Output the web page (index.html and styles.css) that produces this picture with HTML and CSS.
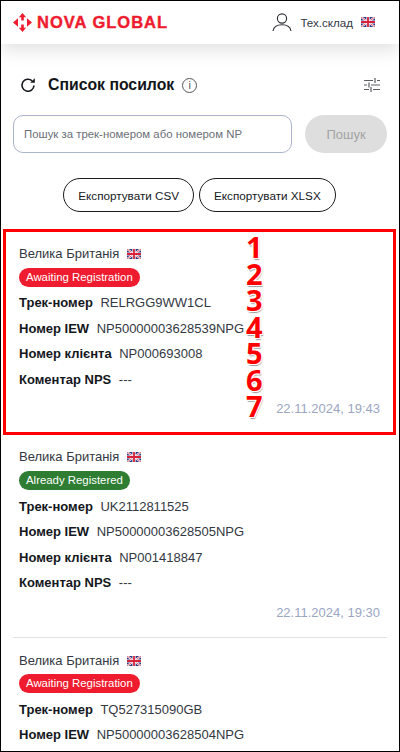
FILE: index.html
```html
<!DOCTYPE html>
<html lang="uk">
  <head>
    <meta charset="UTF-8" />
    <meta name="viewport" content="width=device-width, initial-scale=1.0" />
    <title>Список посилок</title>
    <link rel="stylesheet" href="styles.css">
  </head>

  <body>
    <div class="page">
      <header class="topbar">
        <div class="logo">
          <svg class="logo-mark" viewBox="0 0 19 19" width="19" height="19">
            <path d="M9.500 0l3.600 4.200h-2.300v3.300H8.200V4.200H5.900zM9.500 19l-3.600-4.200h2.300v-3.300h2.600v3.300h2.300zM0 9.500l5-4.300v8.600zM19 9.500l-5 4.300V5.200z" />
          </svg>
          <span class="logo-text">NOVA GLOBAL</span>
        </div>
        <div class="user">
          <svg class="user-icon" viewBox="0 0 20 20" width="20" height="20">
            <circle cx="10" cy="6.500" r="4.600" />
            <path d="M1 19c.6-4 4-6.200 9-6.200s8.400 2.200 9 6.200" />
          </svg>
          <span class="user-name">Тех.склад</span>
          <svg class="flag" viewBox="0 0 14 10" width="14" height="10"><use href="#uk-flag" /></svg>
        </div>
      </header>

      <svg class="sprite" width="0" height="0">
        <symbol id="uk-flag" viewBox="0 0 14 10">
          <rect width="14" height="10" fill="#2b3a80" />
          <path d="M0 0l14 10M14 0L0 10" stroke="#fff" stroke-width="2" />
          <path d="M0 0l14 10M14 0L0 10" stroke="#d8213a" stroke-width="0.7" />
          <path d="M7 0v10M0 5h14" stroke="#fff" stroke-width="3.200" />
          <path d="M7 0v10M0 5h14" stroke="#d8213a" stroke-width="1.800" />
        </symbol>
      </svg>

      <main class="content">
        <div class="title-row">
          <svg class="refresh" viewBox="0 0 16 16" width="16" height="16">
            <path d="M14 8.500a6 6 0 1 1-1.900-4.700" />
            <path class="refresh-tip" d="M14.800 1.200v4.600h-4.600z" />
          </svg>
          <h1 class="title">Список посилок</h1>
          <span class="info">i</span>
          <svg class="filters" viewBox="0 0 16 14" width="16" height="14">
            <path d="M0 2.500h9M13 2.500h3M11 0v5M0 7h3M7 7h9M5 4.500v5M0 11.500h5M9 11.500h7M7 9v5" />
          </svg>
        </div>

        <form class="search">
          <input class="search-input" type="text" placeholder="Пошук за трек-номером або номером NP" />
          <button class="search-button" type="button" disabled>Пошук</button>
        </form>

        <div class="exports">
          <button class="export-button" type="button">Експортувати CSV</button>
          <button class="export-button" type="button">Експортувати XLSX</button>
        </div>

        <section class="parcel">
          <div class="country">Велика Британія <svg class="flag" viewBox="0 0 14 10" width="14" height="10"><use href="#uk-flag" /></svg></div>
          <div class="badge badge-red">Awaiting Registration</div>
          <div class="row"><b>Трек-номер</b><span>RELRGG9WW1CL</span></div>
          <div class="row"><b>Номер IEW</b><span>NP50000003628539NPG</span></div>
          <div class="row"><b>Номер клієнта</b><span>NP000693008</span></div>
          <div class="row"><b>Коментар NPS</b><span>---</span></div>
          <div class="date">22.11.2024, 19:43</div>
        </section>

        <section class="parcel">
          <div class="country">Велика Британія <svg class="flag" viewBox="0 0 14 10" width="14" height="10"><use href="#uk-flag" /></svg></div>
          <div class="badge badge-green">Already Registered</div>
          <div class="row"><b>Трек-номер</b><span>UK2112811525</span></div>
          <div class="row"><b>Номер IEW</b><span>NP50000003628505NPG</span></div>
          <div class="row"><b>Номер клієнта</b><span>NP001418847</span></div>
          <div class="row"><b>Коментар NPS</b><span>---</span></div>
          <div class="date">22.11.2024, 19:30</div>
        </section>

        <section class="parcel">
          <div class="country">Велика Британія <svg class="flag" viewBox="0 0 14 10" width="14" height="10"><use href="#uk-flag" /></svg></div>
          <div class="badge badge-red">Awaiting Registration</div>
          <div class="row"><b>Трек-номер</b><span>TQ527315090GB</span></div>
          <div class="row"><b>Номер IEW</b><span>NP50000003628504NPG</span></div>
        </section>
      </main>

      <!-- annotation over the first card -->
      <div class="callout">
        <span class="mark">1</span>
        <span class="mark">2</span>
        <span class="mark">3</span>
        <span class="mark">4</span>
        <span class="mark">5</span>
        <span class="mark">6</span>
        <span class="mark">7</span>
      </div>
      <div class="frame"></div>
    </div>
  </body>
</html>
```

FILE: styles.css
```css
* {
  box-sizing: border-box;
}

body {
  margin: 0;
  font-family: "Liberation Sans", Arial, sans-serif;
  color: #1f2430;
  background: #fff;
}

.page {
  position: relative;
  width: 400px;
  height: 752px;
  overflow: hidden;
}

.frame {
  position: absolute;
  inset: 0;
  border: 1px solid #000;
  pointer-events: none;
}

.sprite {
  position: absolute;
}

.topbar {
  height: 44px;
  padding: 0 25px 0 13px;
  display: flex;
  justify-content: space-between;
  align-items: center;
  background: #fff;
  box-shadow: 0 4px 20px rgba(0, 0, 0, 0.14);
  position: relative;
}

.logo {
  display: flex;
  align-items: center;
  gap: 5px;
}

.logo-mark {
  fill: #ee1c2e;
}

.logo-text {
  font-weight: 700;
  font-size: 16.500px;
  letter-spacing: 1px;
  color: #ee1c2e;
  -webkit-text-stroke: 0.4px #ee1c2e;
}

.user {
  display: flex;
  align-items: center;
  font-size: 11.600px;
  color: #333842;
}

.user-icon {
  fill: none;
  stroke: #2a2d33;
  stroke-width: 1.100;
  margin-right: 8px;
}

.user-name {
  margin-right: 8px;
}

.flag {
  vertical-align: -1px;
}

.content {
  padding: 31px 13px 0;
}

.title-row {
  height: 20px;
  display: flex;
  align-items: center;
  padding: 0 7px;
}

.refresh {
  fill: none;
  stroke: #15181d;
  stroke-width: 1.600;
  margin-right: 12px;
}

.refresh-tip {
  fill: #15181d;
  stroke: none;
}

.title {
  margin: 0;
  font-size: 15.800px;
  font-weight: 700;
  color: #12151a;
}

.info {
  width: 15px;
  height: 15px;
  margin-left: 8px;
  border: 1.500px solid #555;
  border-radius: 50%;
  font-size: 11px;
  line-height: 13px;
  text-align: center;
  color: #555;
}

.filters {
  margin-left: auto;
  fill: none;
  stroke: #5a5d63;
  stroke-width: 1.200;
}

.search {
  margin-top: 20px;
  display: flex;
  justify-content: space-between;
}

.search-input {
  width: 279px;
  height: 38px;
  padding: 0 10px;
  border: 1px solid #aab4cb;
  border-radius: 10px;
  font-family: inherit;
  font-size: 11.400px;
  outline: none;
}

.search-input::placeholder {
  color: #6b6f76;
  opacity: 1;
}

.search-button {
  width: 82px;
  height: 38px;
  border: 0;
  border-radius: 19px;
  background: #dedede;
  color: #a3a3a3;
  font-family: inherit;
  font-size: 13px;
}

.exports {
  margin-top: 25px;
  padding-right: 1px;
  display: flex;
  justify-content: center;
  gap: 5px;
}

.export-button {
  height: 34px;
  padding: 0 14px;
  border: 1px solid #1b1b1b;
  border-radius: 17px;
  background: #fff;
  color: #15181d;
  font-family: inherit;
  font-size: 11.700px;
}

.parcel {
  padding: 14px 7px 15px 6px;
  border-bottom: 1px solid #e3e3e3;
}

.exports + .parcel {
  margin-top: 19px;
}

.country {
  font-size: 13px;
  line-height: 18px;
  color: #333842;
}

.country .flag {
  margin-left: 4px;
}

.badge {
  display: block;
  width: fit-content;
  margin-top: 4.500px;
  height: 19px;
  padding: 0 7px;
  border-radius: 10px;
  color: #fff;
  font-size: 11.400px;
  line-height: 19px;
}

.badge-red {
  background: #ee1c2e;
}

.badge-green {
  background: #2e7d32;
}

.row {
  display: flex;
  gap: 7.500px;
  height: 25.500px;
  line-height: 25.500px;
  font-size: 13px;
}

.badge + .row {
  margin-top: 3.750px;
}

.row b {
  color: #14171c;
}

.row span {
  color: #333842;
}

.date {
  width: fit-content;
  margin: 8px 0 0 auto;
  font-size: 13px;
  line-height: 18px;
  color: #9aa6c2;
}

.callout {
  position: absolute;
  left: 3px;
  top: 229px;
  width: 393px;
  height: 206px;
  border: 3px solid #ff0000;
  padding: 2px 0 0 240px;
  display: flex;
  flex-direction: column;
  align-items: flex-start;
  pointer-events: none;
}

.mark {
  height: 26.500px;
  font-family: "Open Sans", "DejaVu Sans", sans-serif;
  font-weight: 700;
  font-size: 29px;
  line-height: 26.500px;
  color: #ff0000;
  text-shadow: 1px 1px 0 #fff, -1px 1px 0 #fff, 1px -1px 0 #fff, -1px -1px 0 #fff, 1px 2px 1px #999;
}
```
